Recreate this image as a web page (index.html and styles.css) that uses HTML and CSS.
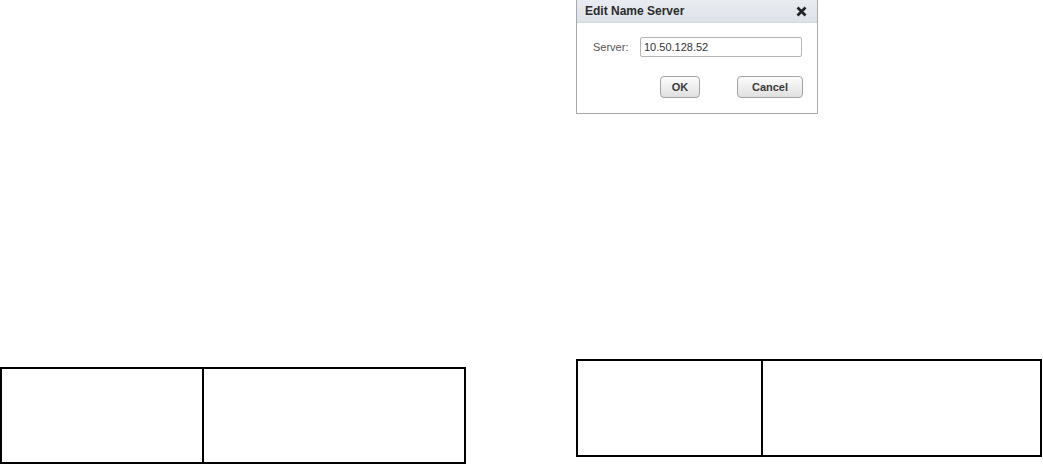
FILE: index.html
```html
<!DOCTYPE html>
<html>
<head>
<meta charset="utf-8">
<link rel="stylesheet" href="styles.css">
</head>
<body>
<div class="page">
  <div class="col col-left">
    <div class="grid grid-left">
      <div class="cell"></div>
      <div class="cell"></div>
    </div>
  </div>
  <div class="col col-right">
    <div class="dialog">
      <div class="dialog-head">
        <span class="dialog-title">Edit Name Server</span>
        <svg class="close" width="11" height="11" viewBox="0 0 11 11"><path d="M1.5 1.5 L9.5 9.5 M9.5 1.5 L1.5 9.5" stroke="#222" stroke-width="2.6" stroke-linecap="butt"/></svg>
      </div>
      <div class="dialog-body">
        <div class="field">
          <label class="label">Server:</label>
          <div class="input">10.50.128.52</div>
        </div>
        <div class="actions">
          <button class="btn btn-ok">OK</button>
          <button class="btn btn-cancel">Cancel</button>
        </div>
      </div>
    </div>
    <div class="grid grid-right">
      <div class="cell"></div>
      <div class="cell"></div>
    </div>
  </div>
</div>
</body>
</html>
```

FILE: styles.css
```css
html, body {
  margin: 0;
  padding: 0;
  background: #fff;
  font-family: "Liberation Sans", Arial, sans-serif;
}
.page {
  display: flex;
  width: 1043px;
  height: 464px;
  overflow: hidden;
}
.col {
  display: flex;
  flex-direction: column;
}
.col-left {
  width: 466px;
}
.col-right {
  margin-left: 110px;
  width: 466px;
}
.grid {
  display: grid;
  border: 2px solid #000;
  box-sizing: border-box;
}
.grid .cell + .cell {
  border-left: 2px solid #000;
}
.grid-left {
  margin-top: 367px;
  height: 98px;
  grid-template-columns: 200px 1fr;
}
.grid-right {
  margin-top: 245px;
  height: 98px;
  width: 466px;
  grid-template-columns: 183px 1fr;
}
.dialog {
  width: 242px;
  height: 114px;
  box-sizing: border-box;
  border: 1px solid #a9a9a9;
  border-top: none;
  display: flex;
  flex-direction: column;
}
.dialog-head {
  height: 22px;
  background: linear-gradient(#e9ecf1, #dde2e9);
  border-bottom: 1px solid #d3d8df;
  display: flex;
  align-items: center;
  justify-content: space-between;
  padding: 0 10px 0 8px;
}
.dialog-title {
  font-size: 12px;
  font-weight: bold;
  color: #2b2b2b;
}
.close {
  display: block;
}
.dialog-body {
  padding: 14px 14px 0 16px;
}
.field {
  display: flex;
  align-items: center;
}
.label {
  font-size: 11px;
  color: #555;
  width: 47px;
}
.input {
  width: 162px;
  height: 20px;
  box-sizing: border-box;
  border: 1px solid #b5b5b5;
  border-radius: 2px;
  font-size: 11px;
  color: #333;
  line-height: 18px;
  padding-left: 3px;
}
.actions {
  display: flex;
  justify-content: flex-end;
  gap: 37px;
  margin-top: 19px;
}
.btn {
  height: 22px;
  box-sizing: border-box;
  border: 1px solid #a4a4a4;
  border-radius: 4px;
  background: linear-gradient(#fcfcfc, #e0e0e0);
  font-family: "Liberation Sans", Arial, sans-serif;
  font-size: 11px;
  font-weight: bold;
  color: #3a3a3a;
  padding: 0;
}
.btn-ok {
  width: 40px;
}
.btn-cancel {
  width: 66px;
}
```
